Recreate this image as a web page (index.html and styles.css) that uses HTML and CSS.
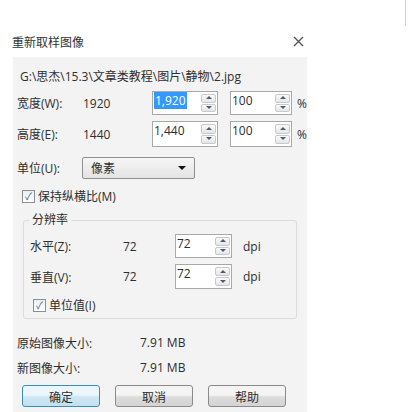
FILE: index.html
```html
<!DOCTYPE html>
<html lang="zh-CN">
<head>
    <meta charset="UTF-8">
    <title>重新取样图像</title>
    <link rel="stylesheet" href="styles.css">
</head>
<body>
    <div class="topstrip"><span class="edge"></span></div>

    <div class="dialog">
        <div class="titlebar">
            <span class="title">重新取样图像</span>
            <svg class="close" width="11" height="11" viewBox="0 0 11 11">
                <path d="M1 1 L10 10 M10 1 L1 10" stroke="#555" stroke-width="1.4" fill="none"/>
            </svg>
        </div>

        <div class="panel">
            <div class="path">G:\思杰\15.3\文章类教程\图片\静物\2.jpg</div>

            <div class="row r-width">
                <span class="label">宽度(W):</span>
                <span class="value">1920</span>
                <div class="spin big"><span class="txt"><span class="sel">1,920</span></span><span class="arrows"><i class="up"></i><i class="down"></i></span></div>
                <div class="spin pct"><span class="txt">100</span><span class="arrows"><i class="up"></i><i class="down"></i></span></div>
                <span class="unit">%</span>
            </div>

            <div class="row r-height">
                <span class="label">高度(E):</span>
                <span class="value">1440</span>
                <div class="spin big"><span class="txt">1,440</span><span class="arrows"><i class="up"></i><i class="down"></i></span></div>
                <div class="spin pct"><span class="txt">100</span><span class="arrows"><i class="up"></i><i class="down"></i></span></div>
                <span class="unit">%</span>
            </div>

            <div class="row r-unit">
                <span class="label">单位(U):</span>
                <div class="select"><span>像素</span><i class="caret"></i></div>
            </div>

            <label class="check c-ratio"><span class="box">&#10003;</span>保持纵横比(M)</label>

            <fieldset class="group">
                <legend>分辨率</legend>
                <div class="row r-h">
                    <span class="label">水平(Z):</span>
                    <span class="value">72</span>
                    <div class="spin dpi"><span class="txt">72</span><span class="arrows"><i class="up"></i><i class="down"></i></span></div>
                    <span class="unit">dpi</span>
                </div>
                <div class="row r-v">
                    <span class="label">垂直(V):</span>
                    <span class="value">72</span>
                    <div class="spin dpi"><span class="txt">72</span><span class="arrows"><i class="up"></i><i class="down"></i></span></div>
                    <span class="unit">dpi</span>
                </div>
                <label class="check c-unit"><span class="box">&#10003;</span>单位值(I)</label>
            </fieldset>

            <div class="info i-first">
                <span class="label">原始图像大小:</span>
                <span>7.91 MB</span>
            </div>
            <div class="info">
                <span class="label">新图像大小:</span>
                <span>7.91 MB</span>
            </div>

            <div class="buttons">
                <button class="default">确定</button>
                <button>取消</button>
                <button>帮助</button>
            </div>
        </div>
    </div>
</body>
</html>
```

FILE: styles.css
```css
body {
    margin: 0;
    background-color: #fff;
    font-family: "Open Sans", "Noto Sans CJK SC", sans-serif;
    font-size: 12px;
    color: #2e2e2e;
    width: 415px;
    height: 412px;
    overflow: hidden;
}

.topstrip {
    height: 27px;
    display: flex;
    justify-content: flex-end;
}
.topstrip .edge {
    width: 1px;
    height: 26px;
    background-color: #d4d4d4;
    margin-right: 9px;
}

.dialog {
    width: 307px;
}

.titlebar {
    height: 30px;
    display: flex;
    align-items: center;
    justify-content: space-between;
    padding-left: 12px;
    padding-right: 3px;
    box-sizing: border-box;
}
.title {
    font-family: "Noto Sans CJK SC", sans-serif;
    font-size: 12px;
    color: #333;
    margin-top: -2px;
}
.close {
    margin-top: -2px;
}

.panel {
    margin-left: 13px;
    background-color: #f3f3f3;
    height: 355px;
    padding-left: 4px;
    box-sizing: border-box;
}

.path {
    padding: 10px 0 0 3px;
    height: 20px;
    line-height: 20px;
}

.row {
    display: flex;
    align-items: center;
}
.row .label {
    width: 66px;
}
.row .value {
    width: 69px;
}
.r-width {
    margin-top: 4px;
    height: 24px;
}
.r-height {
    margin-top: 6px;
    height: 26px;
}
.r-unit {
    margin-top: 10px;
    height: 22px;
}

.spin {
    display: flex;
    justify-content: space-between;
    background-color: #fff;
    border: 1px solid #a9a9a9;
    box-sizing: border-box;
    height: 100%;
}
.spin .txt {
    padding: 1px 0 0 1px;
    line-height: 16px;
}
.spin .sel {
    background-color: #3399ff;
    color: #fff;
    padding: 0 1px;
}
.spin .arrows {
    display: flex;
    flex-direction: column;
    width: 15px;
    padding: 2px 1px 2px 0;
    gap: 1px;
}
.spin .arrows i {
    flex: 1;
    border: 1px solid #c9c9c9;
    border-radius: 2px;
    background: linear-gradient(#fafafa, #e6e6e6);
    position: relative;
}
.spin .arrows i::after {
    content: "";
    position: absolute;
    left: 50%;
    top: 50%;
    margin-left: -3px;
    margin-top: -2px;
    border-left: 3px solid transparent;
    border-right: 3px solid transparent;
}
.spin .arrows .up::after {
    border-bottom: 3px solid #4c5a74;
}
.spin .arrows .down::after {
    border-top: 3px solid #4c5a74;
}
.spin.big {
    width: 66px;
}
.spin.pct {
    width: 62px;
    margin-left: 12px;
}
.row .unit {
    margin-left: 5px;
}

.select {
    width: 113px;
    height: 22px;
    margin-left: -1px;
    border: 1px solid #8e8f8f;
    border-radius: 2px;
    background: linear-gradient(#f6f6f6, #e3e3e3);
    box-sizing: border-box;
    display: flex;
    align-items: center;
    justify-content: space-between;
    padding: 0 8px 0 8px;
}
.select .caret {
    border-left: 4px solid transparent;
    border-right: 4px solid transparent;
    border-top: 4px solid #111;
}

.check {
    display: flex;
    align-items: center;
    height: 18px;
}
.check .box {
    width: 11px;
    height: 11px;
    border: 1px solid #8c8f94;
    background: linear-gradient(#e9eef5, #fff);
    color: #3d5a87;
    font-size: 10px;
    line-height: 11px;
    text-align: center;
    margin-right: 3px;
}
.c-ratio {
    margin: 8px 0 0 5px;
}

.group {
    margin: 8px 0 0 6px;
    width: 274px;
    height: 106px;
    box-sizing: border-box;
    border: 1px solid #dcdcdc;
    border-radius: 3px;
    padding: 0 0 0 6px;
}
.group legend {
    padding: 0 3px;
    margin-left: -1px;
    line-height: 14px;
}
.group .row .label {
    width: 93px;
}
.group .row .value {
    width: 52px;
}
.spin.dpi {
    width: 57px;
}
.group .row .unit {
    margin-left: 11px;
}
.r-h {
    margin-top: 7px;
    height: 24px;
}
.r-v {
    margin-top: 6px;
    height: 25px;
}
.c-unit {
    margin: 7px 0 0 3px;
}

.info {
    display: flex;
    height: 25px;
    align-items: center;
}
.info .label {
    width: 123px;
}
.i-first {
    margin-top: 11px;
}

.buttons {
    display: flex;
    gap: 15px;
    margin: 5px 0 0 5px;
}
.buttons button {
    width: 78px;
    height: 22px;
    font-family: "Noto Sans CJK SC", sans-serif;
    font-size: 12px;
    color: #2e2e2e;
    border: 1px solid #8a8a8a;
    border-radius: 3px;
    background: linear-gradient(#f4f4f4 45%, #dcdcdc 55%, #d4d4d4);
    padding: 0;
}
.buttons button.default {
    border-color: #3c8dbf;
    background: linear-gradient(#eaf6fc 45%, #cfe7f3 55%, #c3e0ef);
}
```
